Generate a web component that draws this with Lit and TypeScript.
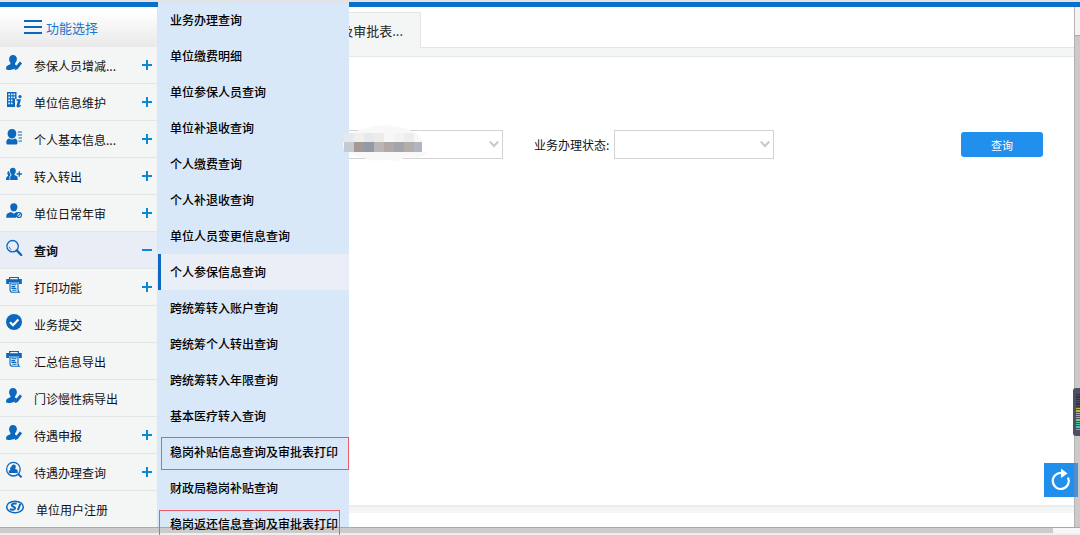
import { LitElement, html, css, svg, nothing } from "lit";
import { customElement, property, state } from "lit/decorators.js";
import { classMap } from "lit/directives/class-map.js";

type IconName =
  | "edit" | "building" | "profile" | "transfer" | "review" | "search"
  | "print" | "check" | "inspect" | "logo";

const icons: Record<IconName, unknown> = {
  edit: svg`<path d="M7 0c2.500 0 4 1.700 3.900 4.300-.1 1.800-.9 2.900-1.700 3.900-.4.800-.2 1.500.5 1.900l1.300.7-1.800 2.600C6.800 14.600 3.500 15.200.4 14.800c-.7-1.800-.3-3.600 1.200-4.300l2.200-.9c.8-.4.9-1.200.4-2C3.500 6.700 3.100 5.700 3.100 4.300 3.100 1.700 4.500 0 7 0z"/><path d="M13.800 6.400l2.300 1.900-4.400 5.600-2.900 1.300.6-3.200z"/>`,
  building: svg`<path fill-rule="evenodd" d="M1 0h9.500v7H9v8H1zM2.300 1.400v1.800h1.600V1.400zm2.600 0v1.800h1.600V1.400zm2.600 0v1.800h1.600V1.400zM2.300 4.400v1.800h1.600V4.400zm2.600 0v1.800h1.600V4.400zm2.600 0v1.800h1.600V4.400zM2.300 7.400v1.800h1.600V7.400zm2.600 0v1.800h1.600V7.400zM2.300 10.400v1.800h1.600v-1.800zm2.600 0v1.800h1.600v-1.800z"/><circle cx="14" cy="4.600" r="1.600"/><path d="M10.600 7.200h4.400l-1.700 6.200 1.800-.6-.4 1.500c-1.700 1.600-4.700 1.500-4.100-.8l1.300-4.800h-1.700z"/>`,
  profile: svg`<path d="M6 0c2.700 0 4.300 1.900 4.300 4.600S8.600 9.600 6 9.600 1.600 7.300 1.600 4.600 3.300 0 6 0zM3 9.400c1.800 1.500 4.200 1.500 6 0 1.900.6 2.500 2 2.500 4 0 1.600-.8 2.200-2 2.200H2.300c-1.300 0-2-.6-2-2.200 0-2 .8-3.400 2.700-4z"/><path d="M11.800 3h4.200M11.800 6h4.200M12.500 9h3.500M12.500 12h3.500" stroke="currentColor" stroke-width="1.200"/>`,
  transfer: svg`<path d="M6.800 1.800c2.100 0 3.200 1.400 3 3.400-.1 1.300-.7 2.200-1.300 2.800v1.100l2.500 1.200c.6.600.7 1.900.7 3.700H4.200V10.600l1.100-.9V8C4.600 7.300 4 6.400 3.900 5.200 3.700 3.200 4.800 1.800 6.800 1.800z"/><path d="M3 5c.2 1.400.7 2.300 1.300 3v1.500l-.8.600V14H0c0-1.900.2-3.100 1.200-3.600l.8-.4V9C1 8 .9 5.400 3 5z"/><path d="M10.600 8h5.400M13.300 5.300v5.400" stroke="currentColor" stroke-width="1.300"/>`,
  review: svg`<path d="M7.800.2c2.300 0 3.700 1.600 3.600 3.900-.1 2-1 3.300-1.900 4.100H6.200C5.200 7.400 4.300 6.100 4.200 4.100 4.100 1.800 5.500.2 7.800.2zM5 9l2.800 1.700L10.600 9l1.600.7-2.200 5.100H.2c0-3 .6-4 2.200-4.700z"/><circle cx="13" cy="12" r="2.500" fill="none" stroke="currentColor" stroke-width="1.200"/><path d="M11.300 13.800l3.500-3.600" stroke="currentColor" stroke-width="1.100"/>`,
  search: svg`<circle cx="6.600" cy="6.200" r="5.700" fill="none" stroke="currentColor" stroke-width="1.300"/><path d="M3.200 6.800a3.600 3.600 0 0 0 2.200 2.800" fill="none" stroke="currentColor" stroke-width=".8"/><path d="M10.800 10.400l4.400 4.600" stroke="currentColor" stroke-width="2.400" stroke-linecap="round"/>`,
  print: svg`<path fill-rule="evenodd" d="M3 0h10v2h2.800v5H13V5.200H3V7H.2V2H3zM4.200 1v1.200h7.600V1z"/><path d="M4 6h8v6.600c0 1.300.7 2 1.200 2.600H6.600C4.600 15.200 4 14 4 12.400z" fill="none" stroke="currentColor" stroke-width="1.100"/><path d="M5.400 7.800h5M5.400 9.600h3.800M5.400 11.400h5M6.200 13.200h4.400" stroke="currentColor" stroke-width="1.100"/>`,
  check: svg`<circle cx="8" cy="8" r="8"/><path d="M4 8.200l3 3 5.400-5.600" fill="none" stroke="#fff" stroke-width="2.200"/>`,
  inspect: svg`<circle cx="7.400" cy="7.200" r="6.800" fill="none" stroke="currentColor" stroke-width="1.300"/><path d="M7.800 2.600c1.400 0 2.100 1 2 2.300-.1 1-.5 1.500-.9 1.900l2.700 1.300.2 2.900H2.800V8.700l1.700-.8c-.8-1-.6-2.600.8-2.800.2-1.600 1-2.500 2.500-2.500z"/><path d="M12.200 12l3.400 3.400" stroke="currentColor" stroke-width="2"/>`,
  logo: svg`<ellipse cx="9" cy="8" rx="8.300" ry="5.700" fill="none" stroke="currentColor" stroke-width="1.500"/><path d="M10.600 4.800C7.600 4 5.200 5.200 6 6.700c.6 1.200 3.400 1 3 2.700-.4 1.500-3.200 1.600-5.200.9M14.300 4.800l-2.400 6.400" fill="none" stroke="currentColor" stroke-width="2"/>`,
};

interface Entry {
  icon: IconName;
  label: string;
  mark?: "+" | "-";
}

const entries: Entry[] = [
  { icon: "edit", label: "参保人员增减...", mark: "+" },
  { icon: "building", label: "单位信息维护", mark: "+" },
  { icon: "profile", label: "个人基本信息...", mark: "+" },
  { icon: "transfer", label: "转入转出", mark: "+" },
  { icon: "review", label: "单位日常年审", mark: "+" },
  { icon: "search", label: "查询", mark: "-" },
  { icon: "print", label: "打印功能", mark: "+" },
  { icon: "check", label: "业务提交" },
  { icon: "print", label: "汇总信息导出" },
  { icon: "edit", label: "门诊慢性病导出" },
  { icon: "edit", label: "待遇申报", mark: "+" },
  { icon: "inspect", label: "待遇办理查询", mark: "+" },
  { icon: "logo", label: "单位用户注册" },
];

const queries = [
  "业务办理查询", "单位缴费明细", "单位参保人员查询", "单位补退收查询",
  "个人缴费查询", "个人补退收查询", "单位人员变更信息查询", "个人参保信息查询",
  "跨统筹转入账户查询", "跨统筹个人转出查询", "跨统筹转入年限查询",
  "基本医疗转入查询", "稳岗补贴信息查询及审批表打印", "财政局稳岗补贴查询",
  "稳岗返还信息查询及审批表打印",
];

@customElement("side-nav")
class SideNav extends LitElement {
  @property() open = "查询";

  static styles = css`
    :host { display: block; background: #f4f6f5; border-right: 1px solid #e2e5e6; }
    .title {
      display: flex; align-items: center; gap: 4px; height: 40px; padding-left: 24px;
      box-sizing: border-box; background: linear-gradient(#fff 10%, #e9e9e9);
      color: #1b76cb; font-size: 13px;
    }
    .bars { width: 18px; height: 16px; color: #0b67bd; }
    ul { margin: 0; padding: 0; list-style: none; }
    button {
      display: flex; align-items: center; width: 100%; height: 37px; padding: 0 5px 0 6px;
      border: 0; border-bottom: 1px solid #e3e6e6; background: none; color: #111;
      font: inherit; font-size: 12px; text-align: left; cursor: pointer;
    }
    .open { background: #e9eef6; font-weight: 700; }
    .icon { width: 16px; height: 16px; margin: 0 12px 5px 0; overflow: visible; color: #0b68bd; fill: currentColor; }
    .wide { width: 18px; }
    .label { flex: 1; white-space: nowrap; }
    .mark { width: 10px; height: 10px; color: #0a8ad6; }
  `;

  render() {
    return html`
      <div class="title">
        <svg class="bars" viewBox="0 0 18 16" stroke="currentColor" stroke-width="2"><path d="M0 2h18M0 8h18M0 14h18" /></svg>
        功能选择
      </div>
      <ul>
        ${entries.map((e) => html`<li>
          <button class=${classMap({ open: e.label === this.open })}>
            <svg class=${classMap({ icon: true, wide: e.icon === "logo" })} viewBox=${e.icon === "logo" ? "0 0 18 16" : "0 0 16 16"}>${icons[e.icon]}</svg>
            <span class="label">${e.label}</span>
            ${e.mark
              ? html`<svg class="mark" viewBox="0 0 10 10" stroke="currentColor" stroke-width="2"><path d=${e.mark === "+" ? "M0 5h10M5 0v10" : "M0 5h10"} /></svg>`
              : nothing}
          </button>
        </li>`)}
      </ul>`;
  }
}

@customElement("sub-menu")
class SubMenu extends LitElement {
  @property() active = "个人参保信息查询";

  static styles = css`
    :host { display: block; background: #d9e8f8; }
    ul { margin: 0; padding: 0; list-style: none; }
    a {
      display: flex; align-items: center; position: relative; height: 36px; padding: 0 0 1px 9px;
      box-sizing: border-box; border-left: 3px solid transparent; color: #000; font-size: 12px;
      font-weight: 500; text-decoration: none; white-space: nowrap;
    }
    .active { background: #eaeef6; border-color: #0a6ac3; }
    .boxed::after, .boxed-last::after {
      content: ""; position: absolute; box-sizing: border-box; border: 1px solid #ee5a62;
    }
    .boxed::after { inset: 3px 0 0 0; }
    .boxed-last::after { inset: 4px 9px -4px -2px; }
  `;

  render() {
    return html`<ul>
      ${queries.map((q, i) => html`<li>
        <a href="#" class=${classMap({ active: q === this.active, boxed: i === 12, "boxed-last": i === 14 })}>${q}</a>
      </li>`)}
    </ul>`;
  }
}

@customElement("app-root")
class AppRoot extends LitElement {
  @state() private levels = [0, 0, 0, 0, 0, 0, 1, 1, 2, 2, 2, 2, 3, 3, 3, 3];

  static styles = css`
    :host {
      display: flex; flex-direction: column; position: relative; height: 100vh; overflow: hidden;
      box-sizing: border-box; border-top: 2px solid #e6e2df; background: #fff; color: #111;
      font-family: "Noto Sans CJK SC", "Liberation Sans", sans-serif; font-size: 12px;
    }
    .stripe { flex: none; height: 5px; background: #0670cc; }
    .body { display: grid; grid-template-columns: 158px minmax(0, 1fr) 6px; flex: 1; min-height: 0; }
    side-nav { overflow: hidden; }
    main { display: flex; flex-direction: column; min-width: 0; }
    .tabs { display: flex; height: 41px; padding-top: 5px; box-sizing: border-box; }
    .tab {
      display: flex; align-items: center; justify-content: flex-end; width: 263px; padding: 0 17px 0 0;
      box-sizing: border-box; border: 1px solid #e3e6e6; border-bottom: 0; background: #f4f6f6;
      color: #222; font: inherit; font-size: 13px;
    }
    .tail { flex: 1; border-bottom: 1px solid #e3e6e6; }
    .strip { height: 9px; box-sizing: border-box; background: #f4f6f6; border-bottom: 1px solid #e6e9e9; }
    form { display: flex; align-items: center; padding: 73px 31px 0 185px; }
    .field { position: relative; }
    select {
      display: block; appearance: none; width: 160px; height: 29px; margin: 0; border: 1px solid #d3d3d3;
      border-radius: 0; background: #fff; font: inherit;
    }
    .chevron { position: absolute; right: 4px; top: 10px; width: 10px; height: 8px; pointer-events: none; }
    label { margin: 0 5px 0 31px; white-space: nowrap; }
    .submit {
      width: 82px; height: 25px; margin-left: auto; padding: 0; border: 0; border-radius: 3px;
      background: #2190ed; color: #fff; font: inherit; font-size: 11px;
    }
    .foot { height: 8px; margin-top: auto; margin-bottom: 14px; box-sizing: border-box; border-top: 2px solid #e9eded; background: #f4f6f6; }
    .vbar { border-left: 1px solid #b4b2b3; background: #cbc9ca; }
    .vbar::before { content: ""; display: block; height: 28px; background: #f3f3f3; border-bottom: 1px solid #aaa; }
    .hbar { display: flex; flex: none; height: 8px; box-sizing: border-box; border-top: 1px solid #aaa8a9; border-bottom: 2px solid #f0eeee; background: #cdcbcc; }
    .hbar::after { content: ""; width: 27px; margin-left: auto; background: #f6f6f6; }
    sub-menu { position: absolute; left: 158px; top: 0; bottom: 8px; width: 191px; z-index: 2; }
    .mosaic { position: absolute; left: 343px; top: 123px; width: 86px; height: 37px; z-index: 3; }
    .reload {
      position: absolute; right: 2px; bottom: 38px; width: 34px; height: 34px; padding: 0; border: 0;
      background: linear-gradient(to right, #2190ed 30px, #4d8fcc 30px); z-index: 2;
    }
    .reload svg { display: block; width: 34px; height: 34px; }
    .meter {
      position: absolute; right: 0; top: 386px; width: 7px; height: 48px; padding: 6px 0 6px 3px; z-index: 2;
      display: flex; flex-direction: column; gap: 1px; box-sizing: border-box;
      border-radius: 3px 0 0 3px; background: #4c5063;
    }
    .meter i { flex: 1; background: #2e3242; }
    .meter .l1 { background: #c3b53f; }
    .meter .l2 { background: #8fc06a; }
    .meter .l3 { background: #45c3a6; }
  `;

  private chevron() {
    return html`<svg class="chevron" viewBox="0 0 10 8" fill="none" stroke="#c9c9c9" stroke-width="2"><path d="M.8 1.500L5 6l4.200-4.500" /></svg>`;
  }

  render() {
    const top = ["#e4e9ee", "#f0efee", "#e8e8ea", "#efebe8", "#f5f7f9", "#f2f3f5", "#ededed"];
    const low = ["#c3cad2", "#a39a94", "#929aa6", "#bab6b8", "#afaaa6", "#a3a5aa", "#b3adab", "#b0b6bb"];
    return html`
      <div class="stripe"></div>
      <div class="body">
        <side-nav></side-nav>
        <main>
          <div class="tabs"><button class="tab">及审批表...</button><div class="tail"></div></div>
          <div class="strip"></div>
          <form>
            <div class="field"><select aria-label="单位"></select>${this.chevron()}</div>
            <label for="status">业务办理状态:</label>
            <div class="field"><select id="status"></select>${this.chevron()}</div>
            <button type="button" class="submit">查询</button>
          </form>
          <div class="foot"></div>
        </main>
        <div class="vbar"></div>
      </div>
      <div class="hbar"></div>
      <sub-menu></sub-menu>
      <svg class="mosaic" viewBox="0 0 86 37">
        <path d="M1 17C3 8 12 7 22 3c14-4 30-3 42 1 8 3 14 6 15 13v9l6 2-10 5-13-1c-5 5-13 4-20 2-7 3-15 2-21-1-9-1-13-4-16-8-5-1-6-5-5-8z" fill="#f8f8f8" />
        ${top.map((c, i) => svg`<rect x=${i * 10 + 1} y="8" width="10" height="9" fill=${c} />`)}
        ${low.map((c, i) => svg`<rect x=${i * 10 + 1} y="17" width=${i === 7 ? 8 : 10} height="10" fill=${c} />`)}
      </svg>
      <div class="meter">${this.levels.map((l) => html`<i class="l${l}"></i>`)}</div>
      <button class="reload" aria-label="刷新">
        <svg viewBox="0 0 34 34"><path d="M17.500 10a8 8 0 1 0 6.500 4.500" fill="none" stroke="#fff" stroke-width="2.200" /><path d="M17 5.500v9.500l6.500-4.500z" fill="#fff" /></svg>
      </button>`;
  }
}
